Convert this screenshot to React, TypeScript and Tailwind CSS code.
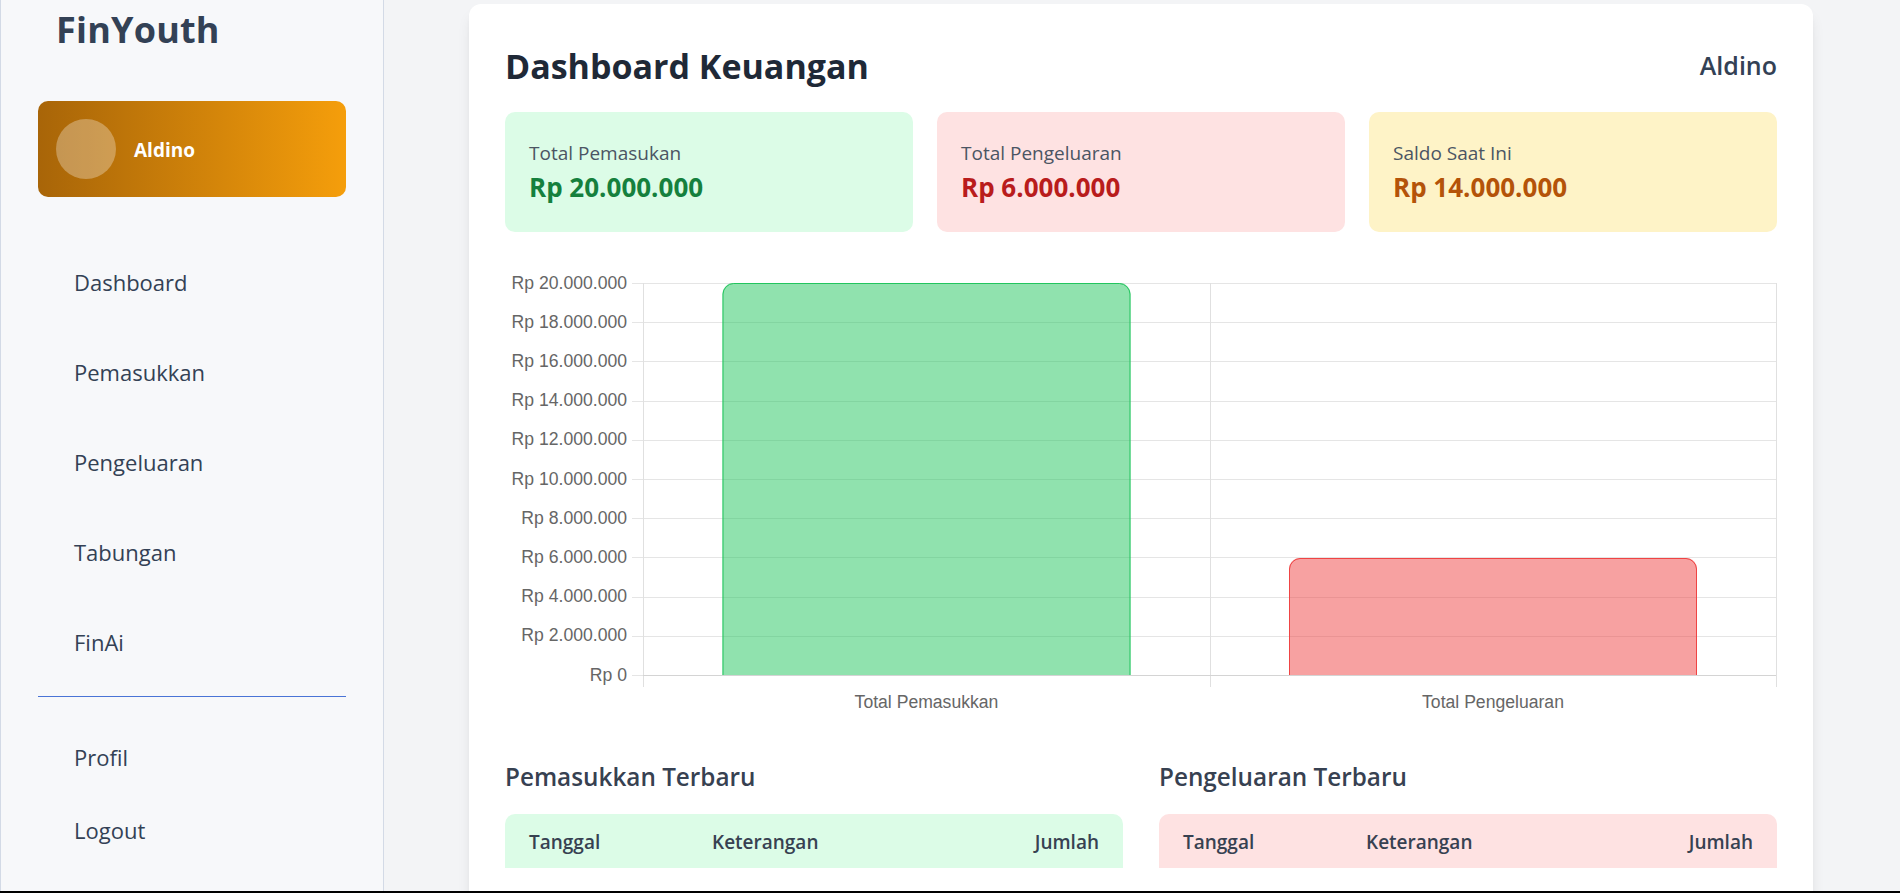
import React from "react";

const navItems = ["Dashboard", "Pemasukkan", "Pengeluaran", "Tabungan", "FinAi"];

const stats = [
  { label: "Total Pemasukan", value: "Rp 20.000.000", box: "bg-[#dcfce7]", text: "text-[#15803d]" },
  { label: "Total Pengeluaran", value: "Rp 6.000.000", box: "bg-[#fee2e2]", text: "text-[#b91c1c]" },
  { label: "Saldo Saat Ini", value: "Rp 14.000.000", box: "bg-[#fef3c7]", text: "text-[#b45309]" },
];

function Sidebar() {
  return (
    <aside className="w-[384px] shrink-0 bg-[#f7f8fa] border-x border-[#d3dae6] px-[37px] flex flex-col">
      <div className="h-[60px] flex items-center pl-[18px]">
        <span className="text-[36px] font-bold text-[#334155] leading-none tracking-[0.2px]">FinYouth</span>
      </div>

      <div className="mt-[41px] h-[96px] rounded-[10px] bg-gradient-to-r from-[#a86508] to-[#f59e0b] flex items-center px-[18px] gap-[18px]">
        <div className="w-[60px] h-[60px] rounded-full bg-white/30" />
        <span className="text-[19px] font-bold text-white pt-[2px]">Aldino</span>
      </div>

      <nav className="mt-[40px] flex flex-col">
        {navItems.map((item) => (
          <a key={item} className="h-[90px] flex items-center pl-9 text-[22px] text-[#334155]">
            {item}
          </a>
        ))}
      </nav>

      <div className="mt-[9px] h-px bg-[#4a74d6]" />

      <div className="mt-[24px] flex flex-col">
        <a className="h-[73px] flex items-center pl-9 text-[22px] text-[#334155]">Profil</a>
        <a className="h-[73px] flex items-center pl-9 text-[22px] text-[#334155]">Logout</a>
      </div>
    </aside>
  );
}

function BarChart() {
  const left = 138;
  const right = 1271;
  const mid = 705;
  const top = 27;
  const zero = 419;
  const step = (zero - top) / 10;
  const ticks = Array.from({ length: 11 }, (_, i) => i);

  const bar = (x: number, w: number, y: number, r: number) =>
    `M${x},${zero} V${y + r} A${r},${r} 0 0 1 ${x + r},${y} H${x + w - r} A${r},${r} 0 0 1 ${x + w},${y + r} V${zero} Z`;
  const outline = (x: number, w: number, y: number, r: number) =>
    `M${x + 0.5},${zero} V${y + r} A${r},${r} 0 0 1 ${x + r},${y + 0.5} H${x + w - r} A${r},${r} 0 0 1 ${x + w - 0.5},${y + r} V${zero}`;

  return (
    <svg width="1272" height="460" className="block mt-6" style={{ fontFamily: '"Liberation Sans", Arial, sans-serif' }}>
      {ticks.map((i) => {
        const y = top + i * step;
        const n = 20 - i * 2;
        return (
          <g key={i}>
            <line x1={127} x2={right} y1={Math.round(y) + 0.5} y2={Math.round(y) + 0.5} stroke="#e5e5e5" />
            <text x={122} y={y + 1} textAnchor="end" dominantBaseline="middle" fontSize="17.6" fill="#666">
              {n === 0 ? "Rp 0" : `Rp ${n}.000.000`}
            </text>
          </g>
        );
      })}
      {[left, mid, right].map((x) => (
        <line key={x} x1={x + 0.5} x2={x + 0.5} y1={top} y2={zero + 12} stroke="#e0e0e0" />
      ))}
      <line x1={left} x2={right} y1={zero + 0.5} y2={zero + 0.5} stroke="#d4d4d4" />

      <path d={bar(217.5, 408, top, 11)} fill="rgba(34,197,94,0.5)" />
      <path d={outline(217.5, 408, top, 11)} fill="none" stroke="#22c55e" />
      <path d={bar(784, 408, 302, 11)} fill="rgba(239,68,68,0.5)" />
      <path d={outline(784, 408, 302, 11)} fill="none" stroke="#ef4444" />

      <text x={421.5} y={447} textAnchor="middle" dominantBaseline="middle" fontSize="17.6" fill="#666">
        Total Pemasukkan
      </text>
      <text x={988} y={447} textAnchor="middle" dominantBaseline="middle" fontSize="17.6" fill="#666">
        Total Pengeluaran
      </text>
    </svg>
  );
}

function RecentTable({ title, head }: { title: string; head: string }) {
  return (
    <div>
      <h3 className="h-[32px] flex items-center text-[24.3px] font-semibold text-[#374151]">{title}</h3>
      <div className={`mt-[21px] rounded-t-[10px] ${head} h-[54px] px-6 pt-[2px] grid grid-cols-[183px_1fr_auto] items-center text-[19px] font-semibold text-[#374151]`}>
        <span>Tanggal</span>
        <span>Keterangan</span>
        <span>Jumlah</span>
      </div>
    </div>
  );
}

export default function App() {
  return (
    <div className="h-screen flex flex-col overflow-hidden font-['Open_Sans',sans-serif]">
      <div className="flex-1 min-h-0 flex">
        <Sidebar />
        <main className="flex-1 min-w-0 bg-[#f3f4f6] pl-[85px] overflow-hidden">
          <section className="mt-1 w-[1344px] bg-white rounded-xl shadow-lg p-9">
            <div className="h-[54px] flex items-center justify-between">
              <h1 className="text-[34px] font-bold text-[#1f2937] -mt-[2px]">Dashboard Keuangan</h1>
              <span className="text-[25px] font-semibold text-[#334155] -mt-[2px]">Aldino</span>
            </div>

            <div className="mt-[18px] grid grid-cols-3 gap-6">
              {stats.map((s) => (
                <div key={s.label} className={`h-[120px] rounded-[10px] ${s.box} px-6 pt-[27px]`}>
                  <p className="text-[19px] text-[#4b5563] leading-[28px]">{s.label}</p>
                  <p className={`mt-[3px] text-[26px] font-bold leading-[34px] ${s.text}`}>{s.value}</p>
                </div>
              ))}
            </div>

            <BarChart />

            <div className="mt-[45px] grid grid-cols-2 gap-9">
              <RecentTable title="Pemasukkan Terbaru" head="bg-[#dcfce7]" />
              <RecentTable title="Pengeluaran Terbaru" head="bg-[#fee2e2]" />
            </div>
            <div className="h-[200px]" />
          </section>
        </main>
      </div>
      <div className="h-[2px] bg-black shrink-0" />
    </div>
  );
}
